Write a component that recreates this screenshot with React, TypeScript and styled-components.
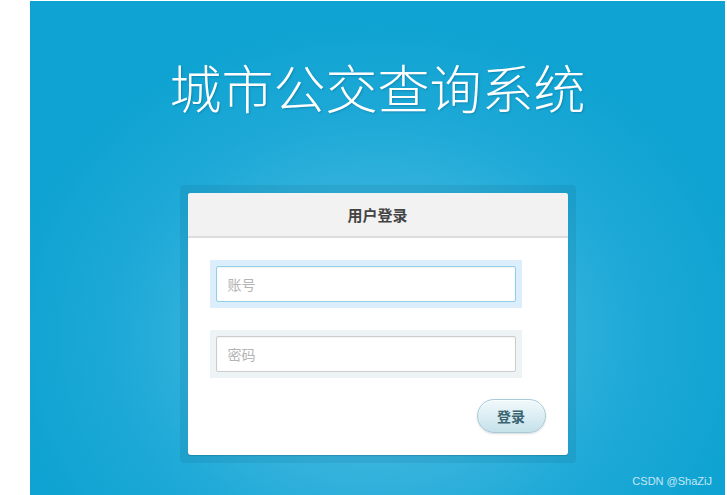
import React from 'react'
import styled, { createGlobalStyle } from 'styled-components'

const GlobalStyle = createGlobalStyle`
    html, body {
        margin: 0;
        padding: 0;
        background: #ffffff;
    }
    body {
        font-family: "Liberation Sans", "Noto Sans CJK SC", sans-serif;
    }
`

const Page = styled.div`
    position: relative;
    display: flex;
    flex-direction: column;
    align-items: center;
    width: 695px;
    height: 494px;
    margin: 1px 0 0 30px;
    overflow: hidden;
    background: radial-gradient(ellipse 380px 320px at 50% 68%, #55c2e4 0%, #3bb5de 35%, #1ea9d7 68%, #0ea3d2 100%);
`

const Title = styled.h1`
    margin: 60px 0 0;
    font-family: "Noto Sans CJK SC", "Noto Sans CJK JP", serif;
    font-size: 52px;
    line-height: 52px;
    font-weight: 300;
    color: #ffffff;
    text-shadow: 1px 1px 2px rgba(0, 50, 80, 0.25);
`

const Frame = styled.div`
    margin-top: 72px;
    padding: 8px;
    border-radius: 4px;
    background: rgba(0, 50, 80, 0.09);
`

const Card = styled.div`
    width: 380px;
    border-radius: 3px;
    overflow: hidden;
    background: #ffffff;
    box-shadow: 0 1px 1px rgba(0, 0, 0, 0.15);
`

const CardHeader = styled.div`
    display: flex;
    align-items: center;
    justify-content: center;
    height: 43px;
    background: #f2f2f2;
    border-bottom: 2px solid #dddddd;
    font-family: "Noto Sans CJK SC", sans-serif;
    font-size: 15px;
    font-weight: 700;
    color: #444444;
`

const Form = styled.form`
    display: flex;
    flex-direction: column;
    gap: 22px;
    padding: 22px;
`

const Halo = styled.div<{ $active?: boolean }>`
    width: 312px;
    padding: 6px;
    box-sizing: border-box;
    background: ${p => (p.$active ? '#dcedfb' : '#eef3f6')};
`

const Field = styled.input<{ $active?: boolean }>`
    display: block;
    width: 100%;
    height: 36px;
    box-sizing: border-box;
    padding: 0 11px;
    border: 1px solid ${p => (p.$active ? '#8fd0ea' : '#cccccc')};
    border-radius: 2px;
    box-shadow: inset 0 1px 2px rgba(0, 0, 0, 0.06);
    font-family: "Noto Sans CJK SC", sans-serif;
    font-size: 14px;
    color: #333333;
    caret-color: #444444;
    outline: none;
    background: #ffffff;

    &::placeholder {
        color: #b4b4b4;
    }
`

const Actions = styled.div`
    display: flex;
    justify-content: flex-end;
    margin-top: -1px;
`

const LoginButton = styled.button`
    width: 69px;
    height: 34px;
    border: 1px solid #a8cad6;
    border-radius: 17px;
    background: linear-gradient(to bottom, #f1f9fc 0%, #dceef4 50%, #c5e1ea 100%);
    box-shadow: 0 1px 2px rgba(0, 0, 0, 0.15), inset 0 1px 0 rgba(255, 255, 255, 0.8);
    font-family: "Noto Sans CJK SC", sans-serif;
    font-size: 14px;
    font-weight: 700;
    color: #3a6470;
    cursor: pointer;
`

const Watermark = styled.span`
    position: absolute;
    right: 13px;
    bottom: 8px;
    font-family: "Liberation Sans", sans-serif;
    font-size: 11px;
    color: rgba(230, 245, 252, 0.85);
`

const App = () => {
    return (
        <>
            <GlobalStyle />
            <Page>
                <Title>城市公交查询系统</Title>
                <Frame>
                    <Card>
                        <CardHeader>用户登录</CardHeader>
                        <Form onSubmit={e => e.preventDefault()}>
                            <Halo $active>
                                <Field $active autoFocus type="text" placeholder="账号" />
                            </Halo>
                            <Halo>
                                <Field type="password" placeholder="密码" />
                            </Halo>
                            <Actions>
                                <LoginButton type="submit">登录</LoginButton>
                            </Actions>
                        </Form>
                    </Card>
                </Frame>
                <Watermark>CSDN @ShaZiJ</Watermark>
            </Page>
        </>
    )
}

export default App
